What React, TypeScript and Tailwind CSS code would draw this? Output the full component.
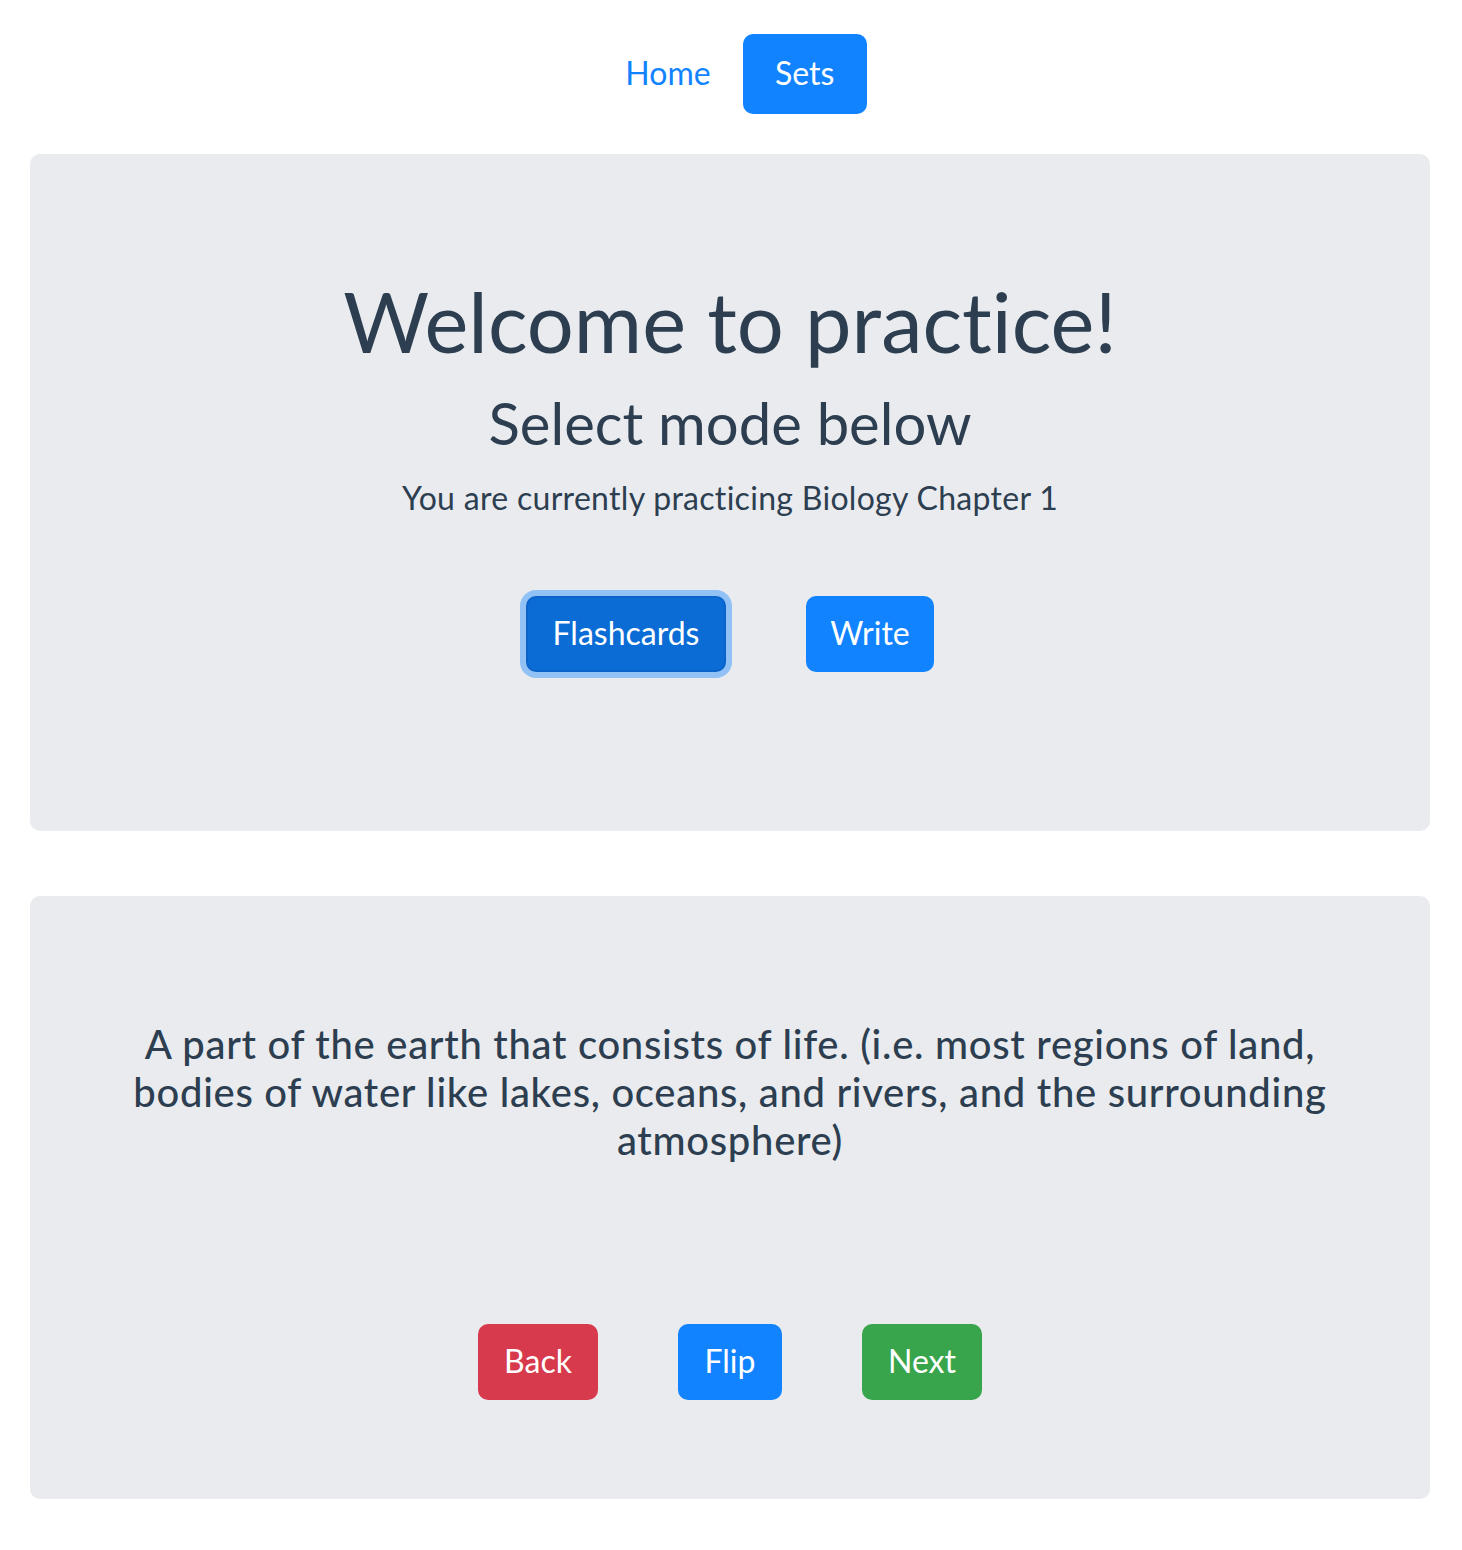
import React from 'react'

const font = { fontFamily: 'Lato, "Noto Sans", sans-serif' }

export default function App() {
  return (
    <div
      className="min-h-[1550px] bg-white pl-[30px] pr-[32px] text-[#2c3e50] [font-variant-ligatures:none]"
      style={font}
    >
      {/* Top nav */}
      <nav className="flex justify-center pt-[34px]">
        <a href="#" className="flex h-[80px] items-center px-8 pb-[2px] text-[32px] text-[#1183ff]">
          Home
        </a>
        <a
          href="#"
          className="flex h-[80px] w-[124px] items-center justify-center rounded-[10px] bg-[#1183ff] pb-[2px] text-[32px] text-white"
        >
          Sets
        </a>
      </nav>

      {/* Mode picker */}
      <section className="mt-[40px] rounded-[10px] bg-[#e9ebef] pt-[124px] pb-[159px] text-center">
        <h1 className="text-[83px] leading-[86px] font-normal">Welcome to practice!</h1>
        <h2 className="mt-[30px] text-[58px] leading-[58px] font-normal">Select mode below</h2>
        <p className="mt-[30px] text-[32px] leading-[32px] tracking-[0.3px]">
          You are currently practicing Biology Chapter 1
        </p>
        <div className="mt-[82px] flex justify-center gap-20">
          <button className="h-[76px] w-[200px] rounded-[10px] border-2 border-[#0a63c9] bg-[#0b6cd6] pb-[2px] text-[32px] text-white ring-[6px] ring-[#91c1f5]">
            Flashcards
          </button>
          <button className="h-[76px] w-[128px] rounded-[10px] bg-[#1183ff] pb-[2px] text-[32px] text-white">
            Write
          </button>
        </div>
      </section>

      {/* Flashcard */}
      <section className="mt-[65px] rounded-[10px] bg-[#e9ebef] pt-[124px] pb-[99px] text-center">
        <h5 className="mx-auto max-w-[1230px] text-[40px] leading-[48px] font-medium tracking-[0.7px]">
          A part of the earth that consists of life. (i.e. most regions of land, bodies of water
          like lakes, oceans, and rivers, and the surrounding atmosphere)
        </h5>
        <div className="mt-[160px] flex justify-center gap-20">
          <button className="h-[76px] w-[120px] rounded-[10px] bg-[#d73a4c] pb-[2px] text-[32px] text-white">
            Back
          </button>
          <button className="h-[76px] w-[104px] rounded-[10px] bg-[#1183ff] pb-[2px] text-[32px] text-white">
            Flip
          </button>
          <button className="h-[76px] w-[120px] rounded-[10px] bg-[#38a54c] pb-[2px] text-[32px] text-white">
            Next
          </button>
        </div>
      </section>
    </div>
  )
}
